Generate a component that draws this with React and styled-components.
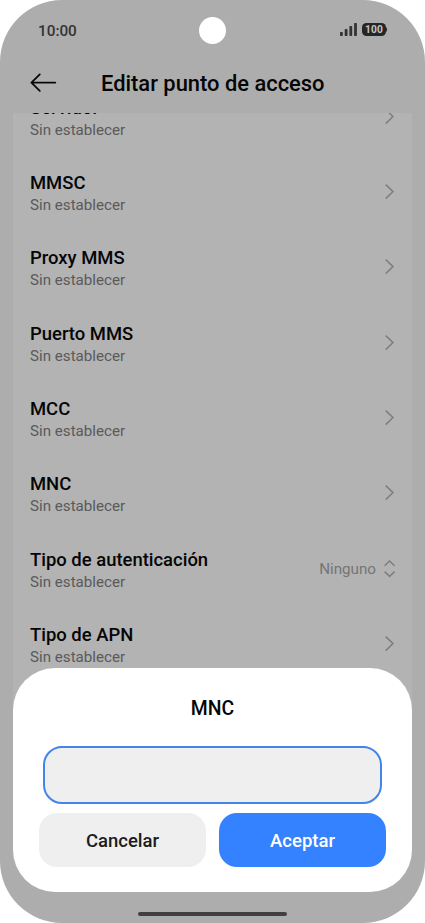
import React from 'react'
import styled, { createGlobalStyle } from 'styled-components'

const rows = [
    { title: 'Servidor', sub: 'Sin establecer' },
    { title: 'MMSC', sub: 'Sin establecer' },
    { title: 'Proxy MMS', sub: 'Sin establecer' },
    { title: 'Puerto MMS', sub: 'Sin establecer' },
    { title: 'MCC', sub: 'Sin establecer' },
    { title: 'MNC', sub: 'Sin establecer' },
    { title: 'Tipo de autenticación', sub: 'Sin establecer', value: 'Ninguno' },
    { title: 'Tipo de APN', sub: 'Sin establecer' },
]

// Icons
const BackArrow = () => (
    <svg width="28" height="20" viewBox="0 0 28 20" fill="none" stroke="#080808" strokeWidth="1.8" strokeLinecap="round" strokeLinejoin="round">
        <path d="M26.3 9.6H2.4M10.8 1.4L2.4 9.6L10.8 17.8" />
    </svg>
)

const Signal = () => (
    <svg width="18" height="14" viewBox="0 0 18 14" fill="#333">
        <rect x="0" y="8.9" width="2.8" height="4.1" rx="0.7" />
        <rect x="4.7" y="6.1" width="2.8" height="6.9" rx="0.7" />
        <rect x="9.4" y="3.1" width="2.8" height="9.9" rx="0.7" />
        <rect x="14.1" y="0" width="2.8" height="13" rx="0.7" />
    </svg>
)

const Chevron = () => (
    <svg width="10" height="16" viewBox="0 0 10 16" fill="none" stroke="#7f7f7f" strokeWidth="1.5">
        <path d="M0.7 0.6L8 7.6L0.7 14.6" />
    </svg>
)

const UpDown = () => (
    <svg width="12" height="18" viewBox="0 0 12 18" fill="none" stroke="#7f7f7f" strokeWidth="1.5">
        <path d="M0.6 5.8L5.6 1L10.6 5.8M0.6 11.6L5.6 16.4L10.6 11.6" />
    </svg>
)

const App = () => {
    return (
        <>
            <GlobalStyle />
            <Screen>
                <StatusBar>
                    <Time>10:00</Time>
                    <StatusIcons>
                        <Signal />
                        <Battery>100</Battery>
                    </StatusIcons>
                    <Camera />
                </StatusBar>
                <Header>
                    <BackArrow />
                    <PageTitle>Editar punto de acceso</PageTitle>
                </Header>
                <ListCard>
                    <List>
                        {rows.map(row => (
                            <Row key={row.title}>
                                <div>
                                    <RowTitle>{row.title}</RowTitle>
                                    <RowSub>{row.sub}</RowSub>
                                </div>
                                <RowEnd $select={!!row.value}>
                                    {row.value && <span>{row.value}</span>}
                                    {row.value ? <UpDown /> : <Chevron />}
                                </RowEnd>
                            </Row>
                        ))}
                    </List>
                </ListCard>
                <Dialog>
                    <DialogTitle>MNC</DialogTitle>
                    <Field type="text" aria-label="MNC" />
                    <Actions>
                        <Button>Cancelar</Button>
                        <Button $primary>Aceptar</Button>
                    </Actions>
                </Dialog>
                <HomeBar />
            </Screen>
        </>
    )
}

const GlobalStyle = createGlobalStyle`
    *, *::before, *::after {
        box-sizing: border-box;
    }

    body {
        margin: 0;
        background: #fff;
        font-family: Roboto, sans-serif;
    }
`

const Screen = styled.div`
    position: relative;
    display: flex;
    flex-direction: column;
    width: 425px;
    height: 923px;
    overflow: hidden;
    border-radius: 62px;
    background: #adadad;
`

const StatusBar = styled.div`
    position: relative;
    display: flex;
    align-items: center;
    justify-content: space-between;
    height: 60px;
    padding: 0 38px;
`

const Time = styled.span`
    color: #333;
    font-size: 15.3px;
    font-weight: 500;
    line-height: 18px;
    padding-top: 1px;
`

const StatusIcons = styled.div`
    display: flex;
    align-items: center;
    gap: 4px;
`

const Battery = styled.span`
    position: relative;
    width: 24px;
    height: 13px;
    margin: 0 1px 1px 0;
    border-radius: 4.5px;
    background: #262626;
    color: #c4c4c4;
    font-size: 10.2px;
    font-weight: 700;
    line-height: 14px;
    letter-spacing: 0.2px;
    text-align: center;

    &::after {
        content: '';
        position: absolute;
        top: 4px;
        right: -1px;
        width: 2px;
        height: 5px;
        border-radius: 0 2px 2px 0;
        background: #262626;
    }
`

// Punch hole, sits over the status bar
const Camera = styled.div`
    position: absolute;
    top: 16.5px;
    left: 199px;
    width: 27px;
    height: 27px;
    border-radius: 50%;
    background: #fff;
`

const Header = styled.header`
    display: flex;
    align-items: center;
    height: 53px;
    padding: 0 29px 7px;
`

const PageTitle = styled.h1`
    margin: 0 0 0 44px;
    color: #050505;
    font-size: 21.9px;
    font-weight: 500;
    line-height: 28px;
    padding-top: 2px;
    white-space: nowrap;
`

const ListCard = styled.main`
    height: 700px;
    margin: 0 13px;
    overflow: hidden;
    background: #b3b3b3;
`

// Scrolled a little, so the first row is cut by the header
const List = styled.div`
    margin-top: -34px;
`

const Row = styled.div`
    display: flex;
    align-items: center;
    justify-content: space-between;
    height: 75.33px;
    padding: 0 17px;
`

const RowTitle = styled.div`
    padding-top: 2px;
    color: #050505;
    font-size: 18.45px;
    font-weight: 500;
    line-height: 24px;
`

const RowSub = styled.div`
    color: #5a5a5a;
    font-size: 15.15px;
    line-height: 20px;
`

const RowEnd = styled.div`
    display: flex;
    align-items: center;
    gap: 8px;
    margin-right: ${props => props.$select ? '-1px' : '0'};
    padding-top: ${props => props.$select ? '1px' : '0'};
    color: #757575;
    font-size: 15.2px;
`

const Dialog = styled.section`
    position: absolute;
    left: 13px;
    right: 13px;
    top: 668px;
    height: 224px;
    padding: 27px 26px 0;
    border-radius: 42px;
    background: #fff;
`

const DialogTitle = styled.h2`
    margin: 0;
    color: #050505;
    font-size: 19.4px;
    font-weight: 500;
    line-height: 28px;
    text-align: center;
`

const Field = styled.input`
    display: block;
    width: calc(100% - 8px);
    height: 58px;
    margin: 23px 4px 9px;
    padding: 0 16px;
    border: 2px solid #4285e8;
    border-radius: 19px;
    outline: none;
    background: #efefef;
    font: 18px Roboto, sans-serif;
`

const Actions = styled.div`
    display: grid;
    grid-template-columns: 1fr 1fr;
    gap: 13px;
`

const Button = styled.button`
    height: 54px;
    padding: 1px 0 0;
    border: none;
    border-radius: 18px;
    background: ${props => props.$primary ? '#3482ff' : '#efefef'};
    color: ${props => props.$primary ? '#fff' : '#1c1c1c'};
    font: 500 18.5px Roboto, sans-serif;
`

const HomeBar = styled.div`
    position: absolute;
    left: 138px;
    top: 912px;
    width: 149px;
    height: 4px;
    border-radius: 2px;
    background: #404040;
`

export default App
